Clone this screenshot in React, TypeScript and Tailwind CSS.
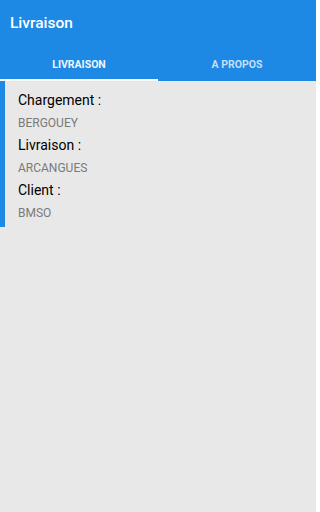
import React from "react";

export default function App() {
  return (
    <div className="w-[316px] h-[512px] bg-[#e8e8e8] flex flex-col" style={{ fontFamily: "Roboto, 'Liberation Sans', sans-serif" }}>
      <div className="bg-[#1e88e5] flex flex-col">
        <div className="h-[46px] flex items-center pl-[10px] pt-[1px] text-white text-[15.5px] font-medium">Livraison</div>
        <div className="flex h-[35px]">
          <div className="flex-1 flex flex-col">
            <div className="flex-1 flex items-center justify-center pt-[4px] text-[10.5px] font-bold text-[#eef6fe]">LIVRAISON</div>
            <div className="h-[2px] bg-white"></div>
          </div>
          <div className="flex-1 flex flex-col">
            <div className="flex-1 flex items-center justify-center pt-[4px] text-[10.5px] font-bold text-[#c3dffa]">A PROPOS</div>
            <div className="h-[2px]"></div>
          </div>
        </div>
      </div>
      <div className="flex">
        <div className="w-[5px] bg-[#1e88e5]"></div>
        <div className="flex flex-col pl-[13px] pt-[8px] pb-[4px]">
          <div className="h-[22px] flex items-center text-[14px] text-black">Chargement :</div>
          <div className="h-[22px] flex items-center pt-[1px] text-[12px] text-[#7a7a7a]">BERGOUEY</div>
          <div className="h-[23px] flex items-center pt-[2px] text-[14px] text-black">Livraison :</div>
          <div className="h-[22px] flex items-center pt-[1px] text-[12px] text-[#7a7a7a]">ARCANGUES</div>
          <div className="h-[23px] flex items-center pt-[2px] text-[14px] text-black">Client :</div>
          <div className="h-[22px] flex items-center pt-[1px] text-[12px] text-[#7a7a7a]">BMSO</div>
        </div>
      </div>
    </div>
  );
}
